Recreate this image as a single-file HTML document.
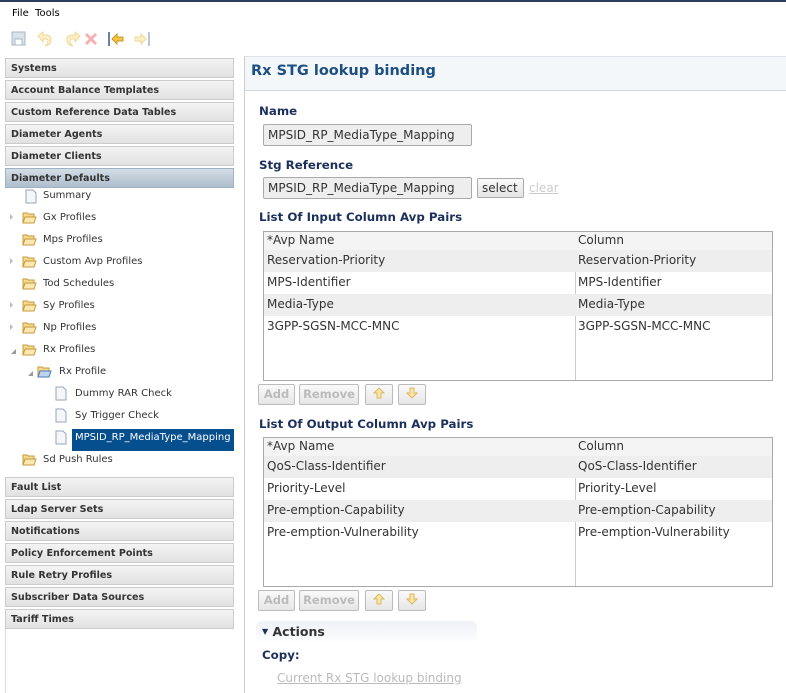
<!DOCTYPE html>
<html><head><meta charset="utf-8"><style>
*{margin:0;padding:0;box-sizing:border-box}
body{width:786px;height:693px;overflow:hidden;background:#fff;font-family:"DejaVu Sans","Liberation Sans",sans-serif;color:#333;position:relative}
.a{position:absolute;white-space:nowrap}
.hd{position:absolute;left:5px;width:229px;height:20px;border:1px solid #ccc;background:linear-gradient(#f4f4f4,#e2e2e2);font-weight:bold;font-size:9.6px;color:#333;padding:4px 0 0 5px;white-space:nowrap}
.sel{background:linear-gradient(#d3dde6,#aebecc);border-color:#9fb1c2}
.ti{position:absolute;font-size:10px;color:#333;white-space:nowrap}
.lbl{position:absolute;font-weight:bold;font-size:11.8px;color:#1c2f5c;white-space:nowrap}
.inp{position:absolute;height:22px;border:1px solid #aaa;border-radius:2px;background:#eee;font-size:12px;padding:3px 0 0 4px;color:#333;white-space:nowrap}
.tbl{position:absolute;left:263px;width:510px;height:150px;border:1px solid #aaa;font-size:12px}
.row{position:absolute;left:0;width:508px;height:22px}
.row span{position:absolute;top:3px;white-space:nowrap}
.btn{position:absolute;height:21px;border:1px solid #bbb;border-radius:2px;background:linear-gradient(#fafafa,#e6e6e6);font-size:11.5px;color:#bbb;font-weight:bold;text-align:center;padding-top:2px}
</style></head><body>
<div class="a" style="left:0;top:0;width:786px;height:2px;background:#2c3e5c"></div>
<div class="a" style="left:12px;top:8px;font-size:10px;color:#000">File&nbsp; Tools</div>
<svg class="a" style="left:10px;top:30px" width="140" height="18">
<rect x="2" y="2" width="13" height="13" fill="#d8e2ea" stroke="#a9b8c5"/><rect x="5" y="9" width="7" height="6" fill="#fff" stroke="#a9b8c5"/>
<path d="M28 6l5-4v3h3q5 0 5 5q0 5-6 6q3-2 3-5q0-2-2-2h-3v3z" fill="#fdf0c8" stroke="#eed898"/>
<path d="M70 6l-5-4v3h-3q-5 0-5 5q0 5 6 6q-3-2-3-5q0-2 2-2h3v3z" fill="#fdf0c8" stroke="#eed898"/>
<path d="M76 4l10 10M86 4l-10 10" stroke="#f5b0b0" stroke-width="3"/>
<rect x="98" y="2" width="2" height="14" fill="#6a82a8"/><path d="M102 9l5-5v3h6v4h-6v3z" fill="#f4c542" stroke="#c99a20"/>
<path d="M136 9l-5-5v3h-6v4h6v3z" fill="#fdf0c8" stroke="#eed898"/><rect x="138" y="2" width="2" height="14" fill="#b9c6d8"/>
</svg>
<div class="hd" style="top:58px">Systems</div>
<div class="hd" style="top:80px">Account Balance Templates</div>
<div class="hd" style="top:102px">Custom Reference Data Tables</div>
<div class="hd" style="top:124px">Diameter Agents</div>
<div class="hd" style="top:146px">Diameter Clients</div>
<div class="hd sel" style="top:168px">Diameter Defaults</div>
<svg class="a" style="left:0;top:188px" width="240" height="290">
<defs>
<g id="d"><path d="M1 1h7l3 3v10h-10z" fill="#f4f6fa" stroke="#9aa6b5"/></g>
<g id="f"><path d="M1 3h4l1 1h6v9h-11z" fill="#f6d98c" stroke="#c49a3c"/><path d="M3 7h11l-2 6h-11z" fill="#fbe7b0" stroke="#c49a3c"/></g>
<g id="t"><path d="M0 0l3 3l-3 3z" fill="#bbb"/></g>
<g id="o"><path d="M0 5l5 0l0-5z" fill="#999"/></g>
</defs>
<use href="#d" x="25" y="1"/>
<use href="#t" x="10" y="26"/><use href="#f" x="22" y="22"/>
<use href="#f" x="22" y="44"/>
<use href="#t" x="10" y="70"/><use href="#f" x="22" y="66"/>
<use href="#f" x="22" y="88"/>
<use href="#t" x="10" y="114"/><use href="#f" x="22" y="110"/>
<use href="#t" x="10" y="136"/><use href="#f" x="22" y="132"/>
<use href="#o" x="11" y="161"/><use href="#f" x="22" y="154"/>
<use href="#o" x="28" y="183"/><path d="M38 179h4l1 1h6v9h-11z" fill="#f6d98c" stroke="#c49a3c"/><path d="M40 183h11l-2 6h-11z" fill="#bcd4f0" stroke="#4a78b8"/>
<use href="#d" x="55" y="198"/>
<use href="#d" x="55" y="220"/>
<use href="#d" x="55" y="242"/>
<use href="#f" x="22" y="264"/>
</svg>
<div class="ti" style="left:43px;top:190px">Summary</div>
<div class="ti" style="left:43px;top:212px">Gx Profiles</div>
<div class="ti" style="left:43px;top:234px">Mps Profiles</div>
<div class="ti" style="left:43px;top:256px">Custom Avp Profiles</div>
<div class="ti" style="left:43px;top:278px">Tod Schedules</div>
<div class="ti" style="left:43px;top:300px">Sy Profiles</div>
<div class="ti" style="left:43px;top:322px">Np Profiles</div>
<div class="ti" style="left:43px;top:344px">Rx Profiles</div>
<div class="ti" style="left:59px;top:366px">Rx Profile</div>
<div class="ti" style="left:75px;top:388px">Dummy RAR Check</div>
<div class="ti" style="left:75px;top:410px">Sy Trigger Check</div>
<div class="a" style="left:72px;top:429px;width:162px;height:22px;background:#064f8f"></div>
<div class="ti" style="left:75px;top:432px;color:#fff">MPSID_RP_MediaType_Mapping</div>
<div class="ti" style="left:43px;top:454px">Sd Push Rules</div>
<div class="hd" style="top:477px">Fault List</div>
<div class="hd" style="top:499px">Ldap Server Sets</div>
<div class="hd" style="top:521px">Notifications</div>
<div class="hd" style="top:543px">Policy Enforcement Points</div>
<div class="hd" style="top:565px">Rule Retry Profiles</div>
<div class="hd" style="top:587px">Subscriber Data Sources</div>
<div class="hd" style="top:609px">Tariff Times</div>
<div class="a" style="left:5px;top:629px;width:1px;height:64px;background:#ddd"></div>
<div class="a" style="left:244px;top:56px;width:1px;height:637px;background:#ccc"></div>
<div class="a" style="left:245px;top:56px;width:541px;height:35px;background:#f4f7fa;border-top:1px solid #dde3ea;border-bottom:1px solid #d0d8e0"></div>
<div class="a" style="left:251px;top:63px;font-size:14.5px;font-weight:bold;color:#1d4f82">Rx STG lookup binding</div>
<div class="lbl" style="left:259px;top:104px">Name</div>
<div class="inp" style="left:263px;top:124px;width:209px">MPSID_RP_MediaType_Mapping</div>
<div class="lbl" style="left:259px;top:158px">Stg Reference</div>
<div class="inp" style="left:263px;top:177px;width:209px">MPSID_RP_MediaType_Mapping</div>
<div class="a" style="left:477px;top:178px;width:47px;height:20px;border:1px solid #aaa;border-radius:2px;background:linear-gradient(#fafafa,#e4e4e4);font-size:12px;padding:2px 0 0 4px;color:#333">select</div>
<div class="a" style="left:529px;top:181px;font-size:12px;color:#ccc;text-decoration:underline">clear</div>
<div class="lbl" style="left:259px;top:210px">List Of Input Column Avp Pairs</div>
<div class="tbl" style="top:231px">
<div class="a" style="left:311px;top:0;width:1px;height:148px;background:#ccc"></div>
<div class="row" style="top:0;height:18px;background:#f4f4f4"><span style="left:3px;top:1px">*Avp Name</span><span style="left:314px;top:1px">Column</span></div>
<div class="row" style="top:18px;background:#eee"><span style="left:3px">Reservation-Priority</span><span style="left:314px">Reservation-Priority</span></div>
<div class="row" style="top:40px"><span style="left:3px">MPS-Identifier</span><span style="left:314px">MPS-Identifier</span></div>
<div class="row" style="top:62px;background:#eee"><span style="left:3px">Media-Type</span><span style="left:314px">Media-Type</span></div>
<div class="row" style="top:84px"><span style="left:3px">3GPP-SGSN-MCC-MNC</span><span style="left:314px">3GPP-SGSN-MCC-MNC</span></div>
</div>
<div class="btn" style="left:258px;top:384px;width:37px">Add</div>
<div class="btn" style="left:299px;top:384px;width:60px">Remove</div>
<div class="btn" style="left:365px;top:384px;width:28px"><svg width="12" height="12"><path d="M6 1l5 5h-3v5h-4v-5h-3z" fill="#fbe6a8" stroke="#d9b860"/></svg></div>
<div class="btn" style="left:398px;top:384px;width:28px"><svg width="12" height="12"><path d="M6 11l5-5h-3v-5h-4v5h-3z" fill="#fbe6a8" stroke="#d9b860"/></svg></div>
<div class="lbl" style="left:259px;top:417px">List Of Output Column Avp Pairs</div>
<div class="tbl" style="top:437px">
<div class="a" style="left:311px;top:0;width:1px;height:148px;background:#ccc"></div>
<div class="row" style="top:0;height:18px;background:#f4f4f4"><span style="left:3px;top:1px">*Avp Name</span><span style="left:314px;top:1px">Column</span></div>
<div class="row" style="top:18px;background:#eee"><span style="left:3px">QoS-Class-Identifier</span><span style="left:314px">QoS-Class-Identifier</span></div>
<div class="row" style="top:40px"><span style="left:3px">Priority-Level</span><span style="left:314px">Priority-Level</span></div>
<div class="row" style="top:62px;background:#eee"><span style="left:3px">Pre-emption-Capability</span><span style="left:314px">Pre-emption-Capability</span></div>
<div class="row" style="top:84px"><span style="left:3px">Pre-emption-Vulnerability</span><span style="left:314px">Pre-emption-Vulnerability</span></div>
</div>
<div class="btn" style="left:258px;top:590px;width:37px">Add</div>
<div class="btn" style="left:299px;top:590px;width:60px">Remove</div>
<div class="btn" style="left:365px;top:590px;width:28px"><svg width="12" height="12"><path d="M6 1l5 5h-3v5h-4v-5h-3z" fill="#fbe6a8" stroke="#d9b860"/></svg></div>
<div class="btn" style="left:398px;top:590px;width:28px"><svg width="12" height="12"><path d="M6 11l5-5h-3v-5h-4v5h-3z" fill="#fbe6a8" stroke="#d9b860"/></svg></div>
<div class="a" style="left:256px;top:621px;width:221px;height:22px;border-radius:6px 6px 0 0;background:linear-gradient(#eef1f6,#fafbfd 80%,#fff)"></div>
<div class="a" style="left:262px;top:624px;font-size:12.5px;font-weight:bold;color:#333"><span style="font-size:8px;color:#1c2f5c;vertical-align:2px">▼</span> Actions</div>
<div class="lbl" style="left:262px;top:648px">Copy:</div>
<div class="a" style="left:277px;top:671px;font-size:12px;color:#bbb;text-decoration:underline">Current Rx STG lookup binding</div>
</body></html>
